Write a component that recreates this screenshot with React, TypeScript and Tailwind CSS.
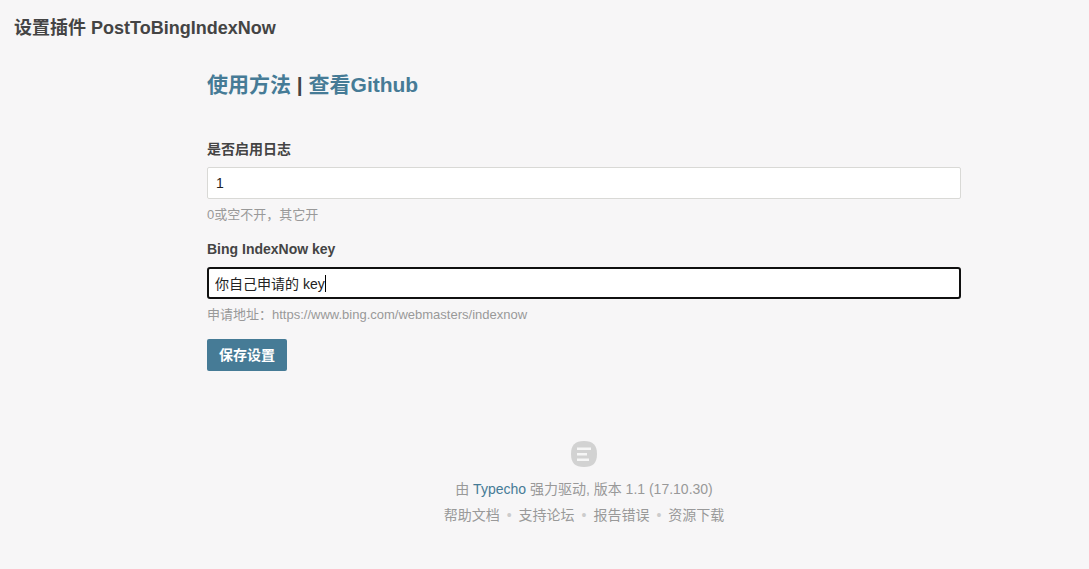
import React from 'react';

const font = '[font-family:"Liberation_Sans","Noto_Sans_CJK_SC",sans-serif]';

function TypechoLogo() {
  return (
    <svg width="26" height="26" viewBox="0 0 26 26" className="block">
      <path d="M13 0C22 0 26 4 26 13C26 22 22 26 13 26C4 26 0 22 0 13C0 4 4 0 13 0Z" fill="#d2d2d2" />
      <rect x="6" y="6.5" width="14" height="2.5" fill="#f6f6f6" />
      <rect x="6" y="12" width="10" height="2.5" fill="#f6f6f6" />
      <rect x="6" y="17.5" width="12" height="2.5" fill="#f6f6f6" />
    </svg>
  );
}

export default function App() {
  return (
    <div className={`${font} h-[569px] overflow-hidden bg-[#f7f6f7] text-[14px] text-[#444]`}>
      <h2 className="pl-[14px] pt-[17px] text-[18px] leading-[22px] font-bold">设置插件 PostToBingIndexNow</h2>

      <div className="ml-[207px] w-[754px]">
        <h1 className="mt-[31px] text-[21px] leading-[30px] font-bold">
          <a className="text-[#467b96]">使用方法</a> | <a className="text-[#467b96]">查看Github</a>
        </h1>

        <form className="mt-[39px]">
          <label className="block text-[14px] leading-[20px] font-bold">是否启用日志</label>
          <input
            readOnly
            value="1"
            className="mt-[8px] block h-[32px] w-full rounded-[2px] border border-[#d9d9d6] bg-white px-[8px] text-[14px] text-[#222] outline-none"
          />
          <p className="mt-[7px] text-[13px] leading-[18px] text-[#999]">0或空不开，其它开</p>

          <label className="mt-[15px] block text-[14px] leading-[20px] font-bold">Bing IndexNow key</label>
          <div className="relative mt-[8px]">
            <input
              readOnly
              value="你自己申请的 key"
              className="block h-[32px] w-full rounded-[3px] border-2 border-[#101010] bg-white px-[6px] text-[14px] text-[#222] outline-none"
            />
            <span className="absolute top-[8px] left-[118px] h-[17px] w-px bg-black" />
          </div>
          <p className="mt-[7px] text-[13px] leading-[18px] text-[#999]">申请地址：https://www.bing.com/webmasters/indexnow</p>

          <button
            type="button"
            className="mt-[15px] block h-[32px] w-[80px] rounded-[2px] bg-[#467b96] text-[14px] font-bold text-white"
          >
            保存设置
          </button>
        </form>

        <footer className="mt-[70px] flex flex-col items-center text-[14px] text-[#999]">
          <TypechoLogo />
          <p className="mt-[9px] leading-[26px]">
            由 <a className="text-[#467b96]">Typecho</a> 强力驱动, 版本 1.1 (17.10.30)
          </p>
          <nav className="leading-[26px]">
            帮助文档<span className="mx-[7px] text-[#ccc]">•</span>支持论坛<span className="mx-[7px] text-[#ccc]">•</span>报告错误<span className="mx-[7px] text-[#ccc]">•</span>资源下载
          </nav>
        </footer>
      </div>
    </div>
  );
}
